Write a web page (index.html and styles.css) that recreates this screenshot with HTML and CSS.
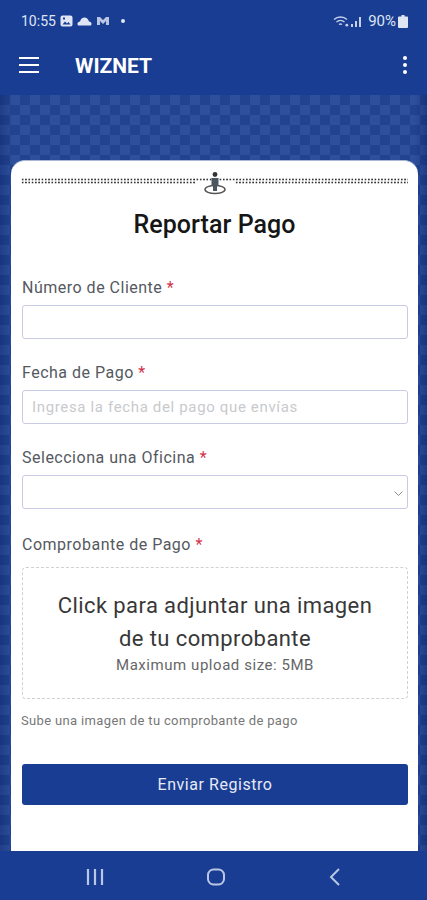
FILE: index.html
```html
<!DOCTYPE html>
<html lang="es">
<head>
    <meta charset="UTF-8">
    <meta name="viewport" content="width=device-width, initial-scale=1.0">
    <title>Reportar Pago</title>
    <link rel="stylesheet" href="styles.css">
</head>
<body>
    <div class="phone">
        <header class="app-header">
            <!-- Status bar -->
            <div class="status-bar">
                <div class="status-left">
                    <span class="status-time">10:55</span>
                    <svg class="status-icon" width="13" height="12" viewBox="0 0 13 12"><rect x="0.5" y="0.5" width="12" height="11" rx="2" fill="#dfe5f3"/><path d="M2.5 9.5l2.5-3 2 2 1.500-1.500 2 2.500z" fill="#1a3d94"/><rect x="3" y="2.500" width="2" height="2" fill="#1a3d94"/></svg>
                    <svg class="status-icon" width="15" height="9" viewBox="0 0 15 9"><path d="M1 8.500c-1.300-2 0-4 2-4 .6-2.400 2.600-4 4.500-4s3.800 1.600 4.500 4c2 0 3.300 2 2 4z" fill="#dfe5f3"/></svg>
                    <svg class="status-icon" width="14" height="10" viewBox="0 0 14 10"><path d="M1 1h3l3 3 3-3h3v8h-3V5L7 8 4 5v4H1z" fill="#b9c5e2"/></svg>
                    <span class="status-dot"></span>
                </div>
                <div class="status-right">
                    <svg class="status-icon" width="16" height="11" viewBox="0 0 16 11"><path d="M1 3.500c3.500-3.300 9.500-3.300 13 0M3.500 6c2.300-2 5.700-2 8 0M6 8.500c1-.7 2-.7 3 0" fill="none" stroke="#c6d0e8" stroke-width="1.400"/><circle cx="13.800" cy="9.200" r="1.400" fill="#c6d0e8"/></svg>
                    <svg class="status-icon" width="12" height="11" viewBox="0 0 12 11"><rect x="0" y="8" width="2" height="3" fill="#c6d0e8"/><rect x="4" y="5" width="2" height="6" fill="#c6d0e8"/><rect x="8" y="1" width="2" height="10" fill="#c6d0e8"/></svg>
                    <span class="status-battery">90%</span>
                    <svg class="status-icon" width="10" height="13" viewBox="0 0 10 13"><path d="M3.500 0h3v1.500H9a1 1 0 0 1 1 1V12a1 1 0 0 1-1 1H1a1 1 0 0 1-1-1V2.500a1 1 0 0 1 1-1h2.500z" fill="#dfe5f3"/></svg>
                </div>
            </div>
            <!-- Toolbar -->
            <div class="toolbar">
                <button class="menu-btn" aria-label="Menu"><span></span><span></span><span></span></button>
                <div class="toolbar-title">WIZNET</div>
                <div class="more-btn"><span></span><span></span><span></span></div>
            </div>
        </header>

        <main class="content">
            <div class="card">
                <div class="card-top">
                    <div class="dots"></div>
                    <svg class="card-logo" width="24" height="24" viewBox="0 0 24 24">
                        <ellipse cx="12" cy="18.500" rx="10" ry="4" fill="none" stroke="#555" stroke-width="1.500"/>
                        <circle cx="12" cy="3.500" r="2.400" fill="#333"/>
                        <path d="M8.500 7h7v7.500h-1.500V20h-4v-5.500H8.500z" fill="#4a5660"/>
                    </svg>
                    <div class="dots"></div>
                </div>

                <h1 class="card-title">Reportar Pago</h1>

                <form class="pay-form">
                    <div class="field">
                        <label class="field-label">Número de Cliente <span class="req">*</span></label>
                        <input class="field-input" type="text">
                    </div>
                    <div class="field">
                        <label class="field-label">Fecha de Pago <span class="req">*</span></label>
                        <input class="field-input" type="text" placeholder="Ingresa la fecha del pago que envías">
                    </div>
                    <div class="field">
                        <label class="field-label">Selecciona una Oficina <span class="req">*</span></label>
                        <div class="select-box">
                            <svg width="9" height="5" viewBox="0 0 9 5"><path d="M.5.5l4 4 4-4" fill="none" stroke="#8a8a8a" stroke-width="1"/></svg>
                        </div>
                    </div>
                    <div class="field upload-field">
                        <label class="field-label">Comprobante de Pago <span class="req">*</span></label>
                        <div class="dropzone">
                            <div class="dropzone-title">Click para adjuntar una imagen<br>de tu comprobante</div>
                            <div class="dropzone-hint">Maximum upload size: 5MB</div>
                        </div>
                        <div class="help-text">Sube una imagen de tu comprobante de pago</div>
                    </div>
                    <button class="submit-btn" type="button">Enviar Registro</button>
                </form>
            </div>
        </main>

        <nav class="nav-bar">
            <svg width="18" height="18" viewBox="0 0 18 18"><path d="M2 1v16M9 1v16M16 1v16" stroke="#b9c6e4" stroke-width="2.200" fill="none"/></svg>
            <svg width="20" height="20" viewBox="0 0 20 20"><rect x="2" y="2.500" width="16" height="15" rx="5.500" fill="none" stroke="#b9c6e4" stroke-width="2"/></svg>
            <svg width="14" height="20" viewBox="0 0 14 20"><path d="M11 2L3 10l8 8" fill="none" stroke="#b9c6e4" stroke-width="2"/></svg>
        </nav>
    </div>
</body>
</html>
```

FILE: styles.css
```css
* {
    box-sizing: border-box;
}

html, body {
    margin: 0;
    height: 100%;
}

body {
    font-family: 'Roboto', sans-serif;
    background-color: #1a3d94;
}

.phone {
    width: 427px;
    height: 900px;
    display: flex;
    flex-direction: column;
    overflow: hidden;
}

.app-header {
    background-color: #1a3d94;
    height: 95px;
    color: white;
    flex-shrink: 0;
}

.status-bar {
    height: 43px;
    padding: 0 19px 1px 21px;
    display: flex;
    justify-content: space-between;
    align-items: center;
    color: #dfe5f3;
    font-size: 14px;
}

.status-left, .status-right {
    display: flex;
    align-items: center;
}

.status-left {
    gap: 4px;
}

.status-right {
    gap: 2px;
}

.status-dot {
    width: 4px;
    height: 4px;
    border-radius: 50%;
    background-color: #dfe5f3;
    margin-left: 7px;
}

.status-battery {
    margin-left: 3px;
    font-size: 15px;
}

.toolbar {
    height: 44px;
    display: flex;
    align-items: center;
    padding: 0 19px;
}

.menu-btn {
    width: 20px;
    height: 16px;
    padding: 0;
    border: none;
    background: none;
    display: flex;
    flex-direction: column;
    justify-content: space-between;
}

.menu-btn span {
    display: block;
    height: 2px;
    background-color: white;
}

.toolbar-title {
    margin: 2px 0 0 36px;
    font-size: 21px;
    font-weight: 700;
    flex: 1;
}

.more-btn {
    display: flex;
    flex-direction: column;
    gap: 3px;
    margin-right: 1px;
}

.more-btn span {
    width: 4px;
    height: 4px;
    border-radius: 50%;
    background-color: white;
}

/* carbon weave behind the card */
.content {
    flex: 1;
    padding: 65px 9px 0 11px;
    background-color: #24468f;
    background-image:
        linear-gradient(90deg, rgba(0, 20, 90, 0.3), rgba(0, 20, 90, 0) 3%, rgba(0, 20, 90, 0) 97%, rgba(0, 20, 90, 0.3)),
        conic-gradient(#2e4f9b 25%, #22438f 0 50%, #2e4f9b 0 75%, #22438f 0);
    background-size: 100% 100%, 20px 20px;
    min-height: 0;
}

.card {
    background-color: white;
    height: 691px;
    border-radius: 14px 14px 0 0;
    padding: 11px 10px 0 10px;
    border-top: 1px solid #a9b6d6;
}

/* top row of dots runs behind the logo, second row stops either side */
.card-top {
    height: 25px;
    display: flex;
    align-items: flex-start;
    background-image: radial-gradient(circle, #333 0.8px, transparent 1.2px);
    background-size: 3.3px 3px;
    background-repeat: repeat-x;
    background-position: 0 6px;
}

.dots {
    flex: 1;
    height: 3px;
    margin-top: 9px;
    background-image: radial-gradient(circle, #333 0.8px, transparent 1.2px);
    background-size: 3.3px 3px;
}

.card-logo {
    margin: -1px 8px 0;
}

.card-title {
    margin: 13px 0 0;
    text-align: center;
    font-size: 25px;
    line-height: 30px;
    font-weight: 500;
    letter-spacing: 0.05px;
    color: #161616;
}

.pay-form {
    margin-top: 39px;
    padding-left: 1px;
}

.field {
    margin-bottom: 24px;
}

.field-label {
    display: block;
    font-size: 16px;
    line-height: 18px;
    color: #55595f;
    letter-spacing: 0.5px;
    margin-bottom: 8px;
}

.field + .field .field-label {
    padding-top: 1px;
}

.req {
    color: #d1324a;
}

.field-input, .select-box {
    display: block;
    width: 100%;
    height: 34px;
    border: 1px solid #c9cbe4;
    border-radius: 3px;
    background-color: white;
    padding: 0 9px;
    font-family: inherit;
    font-size: 15px;
}

.field-input::placeholder {
    color: #c8cacd;
    opacity: 1;
    letter-spacing: 0.65px;
}

.select-box {
    display: flex;
    align-items: center;
    justify-content: flex-end;
    padding: 2px 4px 0 0;
}

.upload-field {
    margin-top: 26px;
    margin-bottom: 0;
}

.upload-field .field-label {
    margin-bottom: 13px;
}

.dropzone {
    height: 132px;
    border: 1px dashed #cfd1d4;
    border-radius: 4px;
    padding-top: 21px;
    text-align: center;
}

.dropzone-title {
    font-size: 22px;
    line-height: 33px;
    color: #383838;
    letter-spacing: 0.4px;
}

.dropzone-hint {
    margin-top: 1px;
    font-size: 15px;
    line-height: 18px;
    color: #666;
    letter-spacing: 0.55px;
}

.help-text {
    margin-top: 15px;
    font-size: 13px;
    line-height: 14px;
    color: #777;
    letter-spacing: 0.35px;
    margin-left: -1px;
}

.submit-btn {
    display: block;
    width: 100%;
    height: 41px;
    margin-top: 36px;
    border: none;
    border-radius: 3px;
    background-color: #1a3d94;
    color: #e6eaf5;
    font-family: inherit;
    font-size: 16px;
    letter-spacing: 0.55px;
}

.nav-bar {
    height: 49px;
    flex-shrink: 0;
    background-color: #1a3d94;
    display: flex;
    justify-content: space-between;
    align-items: center;
    padding: 2px 85px 0 86px;
}
```
